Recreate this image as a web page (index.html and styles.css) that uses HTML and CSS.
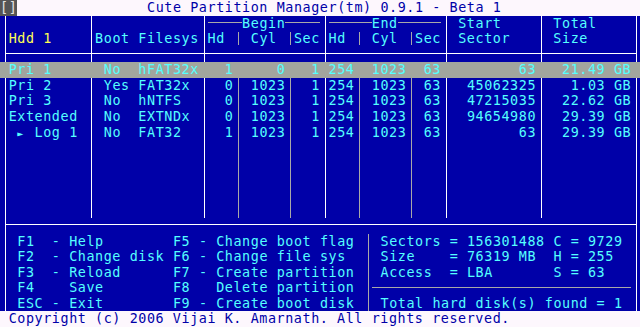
FILE: index.html
```html
<!DOCTYPE html>
<html lang="en">
<head>
    <meta charset="UTF-8">
    <meta name="viewport" content="width=device-width, initial-scale=1.0">
    <title>Cute Partition Manager</title>
    <link rel="stylesheet" href="styles.css">
</head>
<body>
    <div class="screen">
        <header class="titlebar">
            <span class="sysmenu">[]</span>
            <span class="title">Cute Partition Manager(tm) 0.9.1 - Beta 1</span>
        </header>

        <!-- frame -->
        <div class="vrule edge at-b0"></div>
        <div class="vrule edge at-b73"></div>
        <div class="vrule col at-b10"></div>
        <div class="vrule col at-b23"></div>
        <div class="vrule col at-b37"></div>
        <div class="vrule col at-b51"></div>
        <div class="vrule col at-b62"></div>
        <div class="vrule sub at-s27"></div>
        <div class="vrule sub at-s33"></div>
        <div class="vrule sub at-s41"></div>
        <div class="vrule sub at-s47"></div>
        <div class="hrule top"></div>
        <div class="hrule bottom"></div>

        <div class="thead">
            <div class="trow">
                <div class="group begin">Begin</div>
                <div class="group end">End</div>
                <div class="start pad">Start</div>
                <div class="size pad">Total</div>
            </div>
            <div class="trow">
                <div class="name disk">Hdd 1</div>
                <div class="bootfs">Boot Filesys</div>
                <div class="bhd">Hd</div>
                <span class="tick at-s27"></span>
                <div class="bcyl pad">Cyl</div>
                <span class="tick at-s33"></span>
                <div class="bsec">Sec</div>
                <div class="ehd">Hd</div>
                <span class="tick at-s41"></span>
                <div class="ecyl pad">Cyl</div>
                <span class="tick at-s47"></span>
                <div class="esec">Sec</div>
                <div class="start pad">Sector</div>
                <div class="size pad">Size</div>
            </div>
        </div>

        <div class="tbody">
            <div class="trow selected">
                <div class="name">Pri 1</div>
                <div class="boot">No</div>
                <div class="fs">hFAT32x</div>
                <div class="bhd num">1</div>
                <div class="bcyl num">0</div>
                <div class="bsec num">1</div>
                <div class="ehd num">254</div>
                <div class="ecyl num">1023</div>
                <div class="esec num">63</div>
                <div class="start num">63</div>
                <div class="size num">21.49 GB</div>
            </div>
            <div class="trow">
                <div class="name">Pri 2</div>
                <div class="boot">Yes</div>
                <div class="fs">FAT32x</div>
                <div class="bhd num">0</div>
                <div class="bcyl num">1023</div>
                <div class="bsec num">1</div>
                <div class="ehd num">254</div>
                <div class="ecyl num">1023</div>
                <div class="esec num">63</div>
                <div class="start num">45062325</div>
                <div class="size num">1.03 GB</div>
            </div>
            <div class="trow">
                <div class="name">Pri 3</div>
                <div class="boot">No</div>
                <div class="fs">hNTFS</div>
                <div class="bhd num">0</div>
                <div class="bcyl num">1023</div>
                <div class="bsec num">1</div>
                <div class="ehd num">254</div>
                <div class="ecyl num">1023</div>
                <div class="esec num">63</div>
                <div class="start num">47215035</div>
                <div class="size num">22.62 GB</div>
            </div>
            <div class="trow">
                <div class="name">Extended</div>
                <div class="boot">No</div>
                <div class="fs">EXTNDx</div>
                <div class="bhd num">0</div>
                <div class="bcyl num">1023</div>
                <div class="bsec num">1</div>
                <div class="ehd num">254</div>
                <div class="ecyl num">1023</div>
                <div class="esec num">63</div>
                <div class="start num">94654980</div>
                <div class="size num">29.39 GB</div>
            </div>
            <div class="trow">
                <div class="name logical"><span class="arrow">►</span> Log 1</div>
                <div class="boot">No</div>
                <div class="fs">FAT32</div>
                <div class="bhd num">1</div>
                <div class="bcyl num">1023</div>
                <div class="bsec num">1</div>
                <div class="ehd num">254</div>
                <div class="ecyl num">1023</div>
                <div class="esec num">63</div>
                <div class="start num">63</div>
                <div class="size num">29.39 GB</div>
            </div>
        </div>

        <div class="bottom">
            <div class="keys first">
                <div>F1  - Help</div>
                <div>F2  - Change disk</div>
                <div>F3  - Reload</div>
                <div>F4    Save</div>
                <div>ESC - Exit</div>
            </div>
            <div class="keys second">
                <div>F5 - Change boot flag</div>
                <div>F6 - Change file sys</div>
                <div>F7 - Create partition</div>
                <div>F8   Delete partition</div>
                <div>F9 - Create boot disk</div>
            </div>
            <div class="info">
                <div>Sectors = 156301488 C = 9729</div>
                <div>Size    = 76319 MB  H = 255</div>
                <div>Access  = LBA       S = 63</div>
                <div class="info-rule"></div>
                <div>Total hard disk(s) found = 1</div>
            </div>
        </div>

        <footer class="statusbar">Copyright (c) 2006 Vijai K. Amarnath. All rights reserved.</footer>
    </div>
</body>
</html>
```

FILE: styles.css
```css
:root {
    --cw: 8.6486px;
    --row: 15.571px;
    --blue: #0000a8;
    --cyan: #55ffff;
    --yellow: #ffff55;
    --paper: #fdf7fd;
    --ink: #0000a8;
    --rule: #ffffff;
    --rule-dim: #a8a8a8;
    --select: #a2a59e;
    --cols:
        [b0] var(--cw)
        [name] calc(var(--cw) * 9)
        [b10] var(--cw)
        [boot] calc(var(--cw) * 5)
        [fs] calc(var(--cw) * 7)
        [b23] var(--cw)
        [bhd] calc(var(--cw) * 3)
        [s27] var(--cw)
        [bcyl] calc(var(--cw) * 5)
        [s33] var(--cw)
        [bsec] calc(var(--cw) * 3)
        [b37] var(--cw)
        [ehd] calc(var(--cw) * 3)
        [s41] var(--cw)
        [ecyl] calc(var(--cw) * 5)
        [s47] var(--cw)
        [esec] calc(var(--cw) * 3)
        [b51] var(--cw)
        [start] calc(var(--cw) * 10)
        [b62] var(--cw)
        [size] calc(var(--cw) * 10)
        [b73] var(--cw);
}

body {
    margin: 0;
    background: var(--blue);
    overflow: hidden;
}

.screen {
    width: 640px;
    height: 327px;
    display: grid;
    grid-template-columns: var(--cols);
    grid-template-rows: repeat(21, 1fr);
    background: var(--blue);
    color: var(--cyan);
    font-family: "DejaVu Sans Mono", monospace;
    font-size: 13.4px;
    line-height: var(--row);
    letter-spacing: calc(var(--cw) - 0.60205em);
    white-space: pre;
    overflow: hidden;
}

/* title and status bars */
.titlebar {
    grid-row: 1;
    grid-column: 1 / -1;
    display: flex;
    background: var(--paper);
    color: var(--ink);
}

.sysmenu {
    background: #555555;
    color: #e4e4e4;
}

.title {
    margin-left: calc(var(--cw) * 15);
}

.statusbar {
    grid-row: 21;
    grid-column: 1 / -1;
    background: var(--paper);
    color: var(--ink);
    padding-left: var(--cw);
}

/* frame lines */
.vrule {
    width: 1px;
    margin-left: 5px;
    justify-self: start;
    background: var(--rule);
}

.vrule.edge { grid-row: 2 / 21; }
.vrule.col  { grid-row: 2 / 15; }
.vrule.sub  { grid-row: 6 / 15; background: var(--rule-dim); }

.at-b0  { grid-column: b0; }
.at-b10 { grid-column: b10; }
.at-b23 { grid-column: b23; }
.at-b37 { grid-column: b37; }
.at-b51 { grid-column: b51; }
.at-b62 { grid-column: b62; }
.at-b73 { grid-column: b73; }
.at-s27 { grid-column: s27; }
.at-s33 { grid-column: s33; }
.at-s41 { grid-column: s41; }
.at-s47 { grid-column: s47; }

.hrule {
    grid-column: 1 / -1;
    align-self: start;
    height: 1px;
    margin: 6.5px 3px 0 5px;
    background: var(--rule);
}

.hrule.top    { grid-row: 4; }
.hrule.bottom { grid-row: 15; }

/* partition table */
.thead {
    grid-row: 2 / 4;
    grid-column: 1 / -1;
    display: grid;
    grid-template-rows: repeat(2, 1fr);
}

.tbody {
    grid-row: 5 / 10;
    grid-column: 1 / -1;
    display: grid;
    grid-template-rows: repeat(5, 1fr);
}

.trow {
    display: grid;
    grid-template-columns: var(--cols);
}

.trow.selected {
    background: var(--select);
    margin-right: 4px;
}

.name   { grid-column: name; }
.boot   { grid-column: boot; padding-left: var(--cw); }
.fs     { grid-column: fs; }
.bootfs { grid-column: boot / b23; }
.bhd    { grid-column: bhd; }
.bcyl   { grid-column: bcyl; }
.bsec   { grid-column: bsec; }
.ehd    { grid-column: ehd; }
.ecyl   { grid-column: ecyl; }
.esec   { grid-column: esec; }
.start  { grid-column: start; }
.size   { grid-column: size; }

.pad { padding-left: var(--cw); }
.num { text-align: right; }

.disk { color: var(--yellow); }

.logical { padding-left: var(--cw); }

.arrow {
    font-size: 10px;
    letter-spacing: calc(var(--cw) - 0.60205em);
}

.group {
    display: flex;
    align-items: center;
}

.group::before,
.group::after {
    content: "";
    flex: 1;
    height: 1px;
    margin-bottom: 2px;
    background: var(--rule-dim);
}

.group.begin { grid-column: bhd / b37; }
.group.end   { grid-column: ehd / b51; }

.tick {
    width: 1px;
    margin: 1px 0 2px 5px;
    justify-self: start;
    background: var(--rule-dim);
}

/* key help and disk info */
.bottom {
    grid-row: 16 / 21;
    grid-column: 1 / -1;
    display: grid;
    grid-template-columns: calc(var(--cw) * 2) calc(var(--cw) * 18) calc(var(--cw) * 22) 1fr;
}

.keys {
    display: flex;
    flex-direction: column;
}

.keys.first  { grid-column: 2; }
.keys.second { grid-column: 3; }

.info {
    grid-column: 4;
    display: flex;
    flex-direction: column;
    margin-left: 5px;
    padding-left: calc(var(--cw) * 2 - 6px);
    border-left: 1px solid var(--rule-dim);
}

.info-rule {
    width: calc(var(--cw) * 30);
    height: 1px;
    margin: 6.5px 0 8.071px calc(var(--cw) * -1);
    background: var(--rule-dim);
}
```
